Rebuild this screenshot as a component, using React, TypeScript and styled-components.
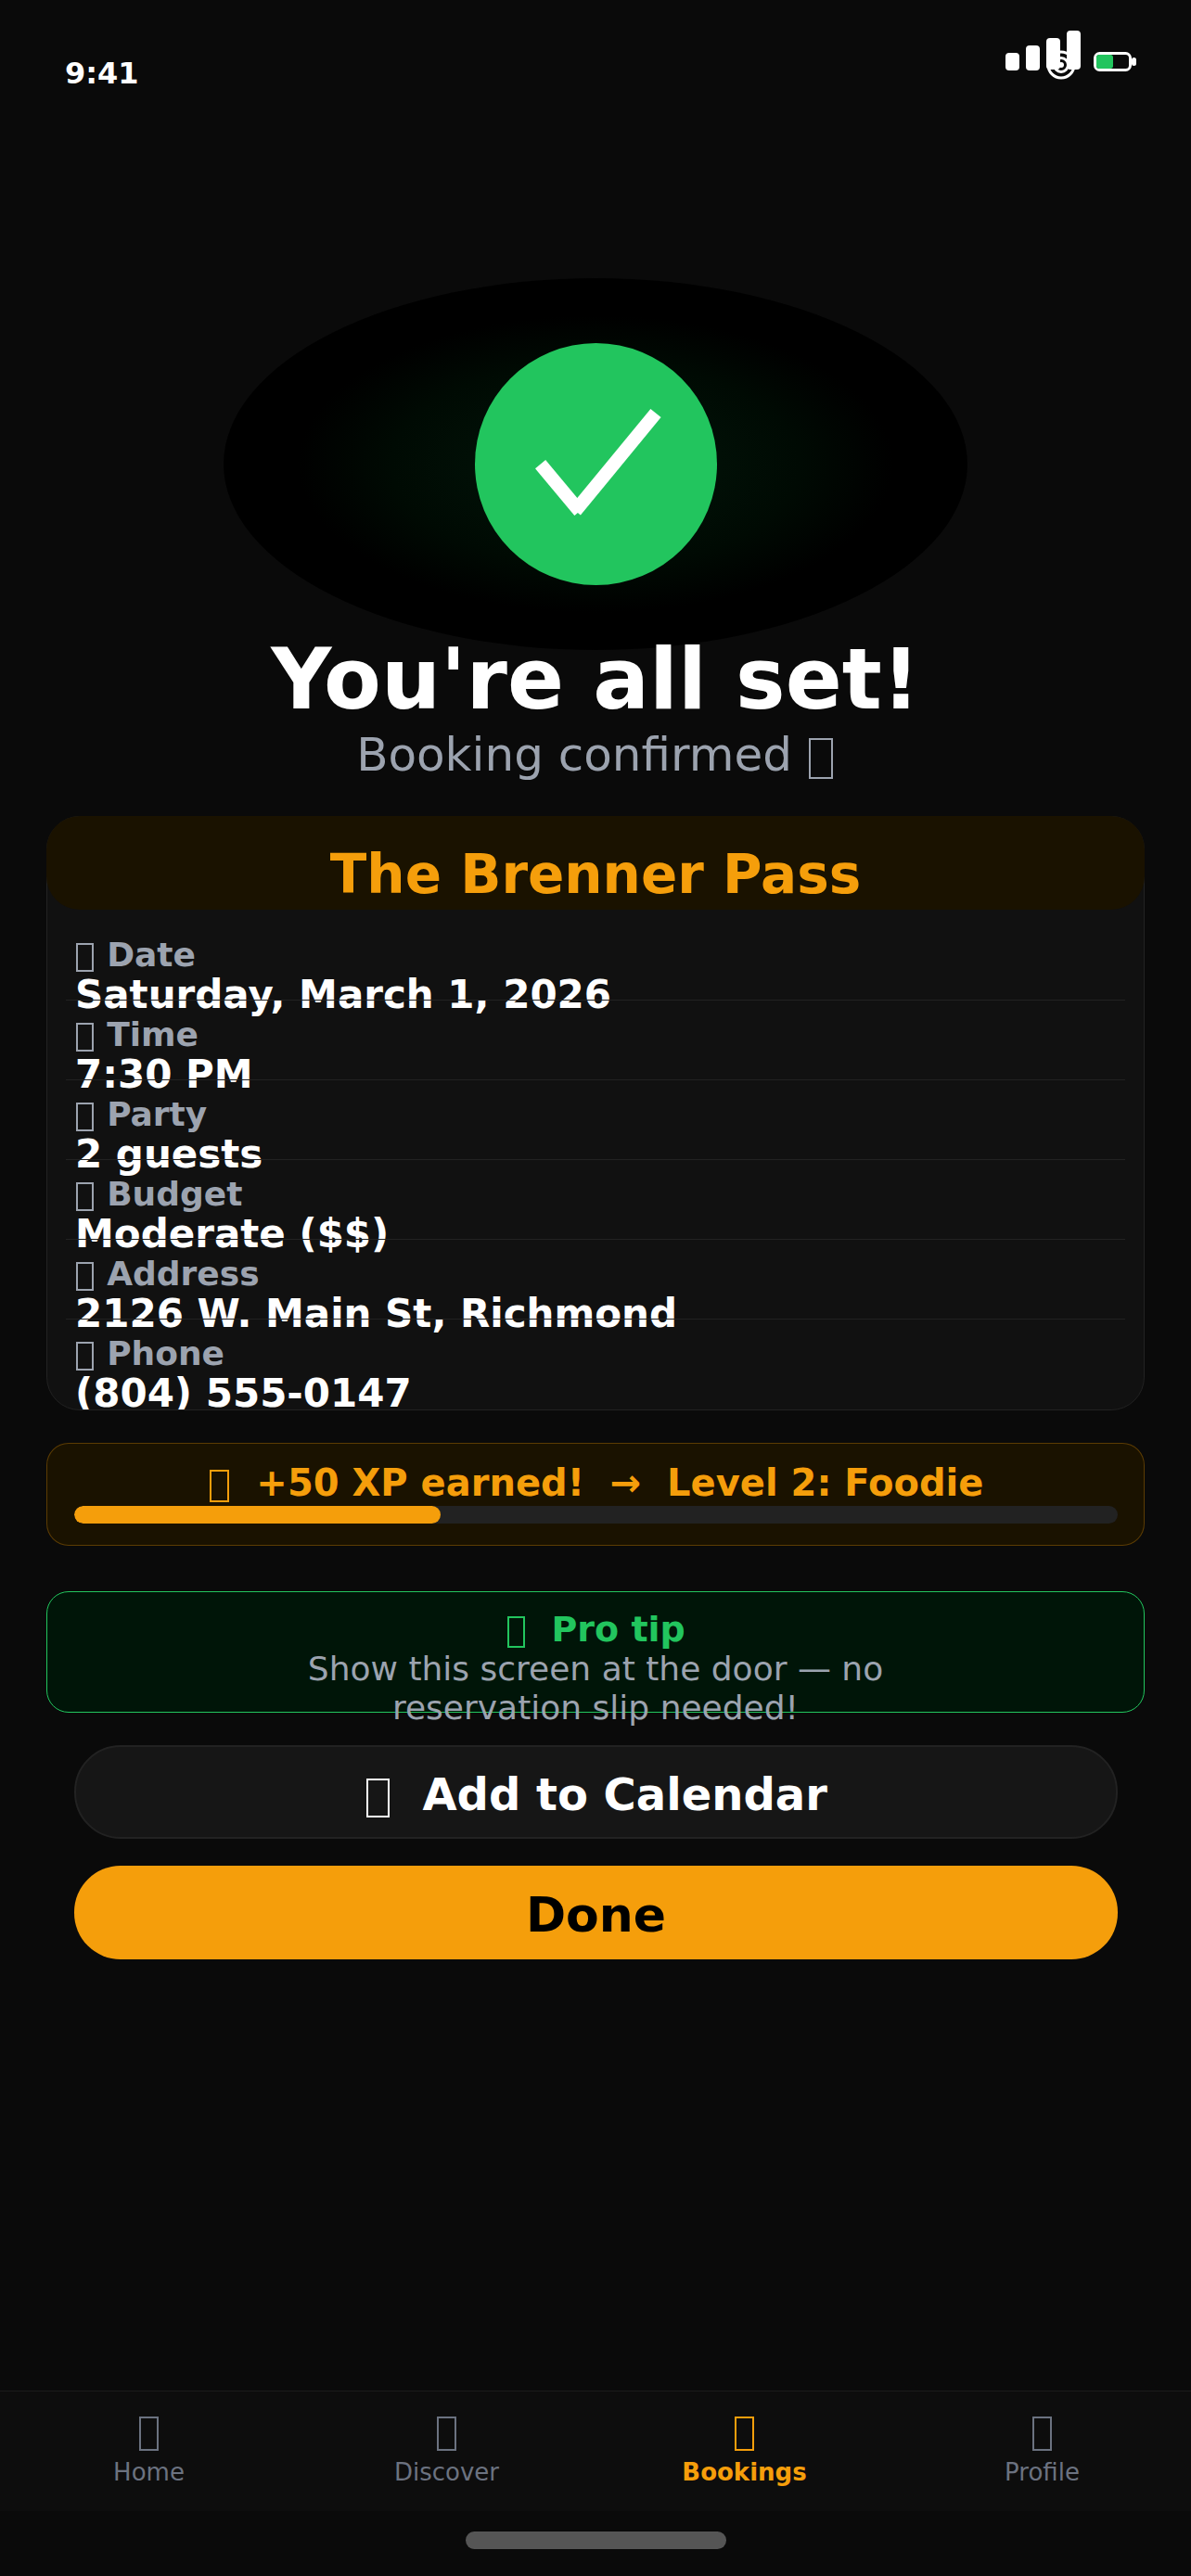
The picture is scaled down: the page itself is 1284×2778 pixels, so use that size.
import React, { FC } from 'react';
import styled, { createGlobalStyle } from 'styled-components';

const GlobalStyle = createGlobalStyle`
  html, body {
    margin: 0;
    padding: 0;
    background: #0a0a0a;
  }
  * {
    box-sizing: border-box;
  }
`;

const Page = styled.div`
  position: relative;
  display: flex;
  flex-direction: column;
  width: 1284px;
  height: 2778px;
  overflow: hidden;
  background: #0a0a0a;
  color: #fff;
  font-family: 'DejaVu Sans', sans-serif;
`;

const StatusBar = styled.div`
  display: flex;
  justify-content: space-between;
  align-items: flex-start;
  height: 370px;
  padding: 33px 59px 0 70px;
`;

const Time = styled.span`
  margin-top: 28px;
  font-size: 32px;
  font-weight: 700;
  line-height: 36px;
`;

const StatusIcons = styled.div`
  display: flex;
  align-items: flex-start;
  gap: 14px;
`;

// the missing-glyph box the reference shows in place of each emoji
const Tofu = styled.span`
  display: inline-block;
  width: 0.52em;
  height: 0.88em;
  margin: 0 0.04em;
  border: 2px solid currentColor;
  vertical-align: -0.18em;
`;

const Hero = styled.div`
  position: relative;
  display: flex;
  flex-direction: column;
  align-items: center;
`;

const Glow = styled.div`
  position: absolute;
  top: -70px;
  left: 241px;
  width: 802px;
  height: 401px;
  border-radius: 50%;
  background: radial-gradient(ellipse closest-side, #021a0b 0%, #010f06 34%, #000a03 55%, #000 80%);
`;

const CheckCircle = styled.div`
  position: relative;
  display: flex;
  align-items: center;
  justify-content: center;
  width: 261px;
  height: 261px;
  border-radius: 50%;
  background: #22c55e;
`;

const Title = styled.h1`
  position: relative;
  margin: 52px 0 0;
  font-size: 90px;
  font-weight: 700;
  line-height: 100px;
`;

const Subtitle = styled.p`
  margin: 0;
  font-size: 50px;
  line-height: 62px;
  color: #9ca3af;
`;

const Content = styled.div`
  display: flex;
  flex-direction: column;
  padding: 0 50px;
`;

const Card = styled.div`
  margin-top: 35px;
  height: 641px;
  display: flex;
  flex-direction: column;
  border: 1px solid #222;
  border-radius: 36px;
  background: #111;
`;

const CardHeader = styled.div`
  flex: none;
  height: 101px;
  margin: -1px -1px 0;
  border-radius: 36px;
  background: #1a1200;
  font-size: 58px;
  font-weight: 700;
  line-height: 126px;
  text-align: center;
  color: #f59e0b;
`;

const CardBody = styled.div`
  flex: 1;
  display: flex;
  flex-direction: column;
  min-height: 0;
  padding: 11px 20px;
  overflow: hidden;
  border-radius: 0 0 36px 36px;
`;

const Row = styled.div`
  flex: none;
  height: 86px;
  padding: 16px 10px 0;
  border-top: 1px solid transparent;

  & + & {
    border-top-color: #222;
  }
`;

const RowLabel = styled.div`
  font-size: 36px;
  font-weight: 700;
  line-height: 42px;
  color: #9ca3af;
`;

const RowValue = styled.div`
  font-size: 42px;
  font-weight: 700;
  line-height: 43px;
  white-space: nowrap;
`;

const XpBox = styled.div`
  height: 111px;
  margin-top: 35px;
  padding: 17px 28px 0 29px;
  border: 1px solid rgba(245, 158, 11, 0.3);
  border-radius: 24px;
  background: #1a1200;
`;

const XpText = styled.div`
  font-size: 40px;
  font-weight: 700;
  line-height: 50px;
  text-align: center;
  white-space: pre;
  color: #f59e0b;
`;

const XpTrack = styled.div`
  height: 19px;
  border-radius: 10px;
  background: #222;
  overflow: hidden;
`;

const XpFill = styled.div`
  height: 100%;
  border-radius: 10px;
  background: #f59e0b;
`;

const TipBox = styled.div`
  height: 131px;
  margin-top: 49px;
  padding: 19px 30px 0;
  border: 1px solid #22c55e;
  border-radius: 24px;
  background: #001508;
  text-align: center;
`;

const TipTitle = styled.div`
  font-size: 38px;
  font-weight: 700;
  line-height: 43px;
  white-space: pre;
  color: #22c55e;
`;

const TipText = styled.div`
  font-size: 36px;
  line-height: 42px;
  color: #9ca3af;
`;

const Actions = styled.div`
  display: flex;
  flex-direction: column;
  gap: 29px;
  margin-top: 35px;
  padding: 0 29px 0 30px;
`;

const ActionButton = styled.button<{ $primary?: boolean }>`
  height: 101px;
  padding: 4px 0 0;
  border: ${p => (p.$primary ? 'none' : '2px solid #222')};
  border-radius: 50px;
  background: ${p => (p.$primary ? '#f59e0b' : '#161616')};
  color: ${p => (p.$primary ? '#000' : '#fff')};
  font-family: inherit;
  font-size: ${p => (p.$primary ? '52px' : '48px')};
  font-weight: 700;
  white-space: pre;
`;

const BottomNav = styled.nav`
  display: grid;
  grid-template-columns: repeat(4, 1fr);
  height: 130px;
  margin-top: auto;
  padding-top: 17px;
  border-top: 1px solid #1c1c1c;
  background: #0d0d0d;
`;

const Tab = styled.div<{ $active?: boolean }>`
  display: flex;
  flex-direction: column;
  align-items: center;
  color: ${p => (p.$active ? '#f59e0b' : '#6b7280')};
  font-weight: ${p => (p.$active ? 700 : 400)};
`;

const TabIcon = styled.span`
  font-size: 42px;
  line-height: 50px;
`;

const TabLabel = styled.span`
  margin-top: 5px;
  font-size: 26px;
  line-height: 30px;
`;

const HomeBar = styled.div`
  display: flex;
  justify-content: center;
  height: 70px;
  padding-top: 22px;
`;

const HomeIndicator = styled.div`
  width: 281px;
  height: 19px;
  border-radius: 10px;
  background: #555;
`;

const rows = [
  { label: 'Date', value: 'Saturday, March 1, 2026' },
  { label: 'Time', value: '7:30 PM' },
  { label: 'Party', value: '2 guests' },
  { label: 'Budget', value: 'Moderate ($$)' },
  { label: 'Address', value: '2126 W. Main St, Richmond' },
  { label: 'Phone', value: '(804) 555-0147' },
];

const tabs = [
  { label: 'Home' },
  { label: 'Discover' },
  { label: 'Bookings', active: true },
  { label: 'Profile' },
];

const SignalIcon: FC = () => (
  <svg width="81" height="55" viewBox="0 0 81 55" fill="#fff">
    <rect x="0" y="24" width="15" height="19" rx="4" />
    <rect x="22" y="16" width="15" height="27" rx="4" />
    <rect x="44" y="8" width="15" height="34" rx="4" />
    <rect x="66" y="0" width="15" height="42" rx="4" />
    <circle cx="60" cy="37" r="14" fill="none" stroke="#fff" strokeWidth="3" />
    <circle cx="60" cy="37" r="7.5" fill="none" stroke="#fff" strokeWidth="3" />
    <circle cx="60" cy="37" r="3" />
  </svg>
);

const BatteryIcon: FC = () => (
  <svg width="46" height="21" viewBox="0 0 46 21" style={{ marginTop: 23 }}>
    <rect x="1.5" y="1.5" width="38" height="18" rx="5" fill="none" stroke="#fff" strokeWidth="3" />
    <rect x="3" y="3" width="18" height="15" rx="3" fill="#22c55e" />
    <rect x="41" y="6" width="5" height="9" rx="2.5" fill="#fff" />
  </svg>
);

const CheckMark: FC = () => (
  <svg width="261" height="261" viewBox="0 0 261 261" fill="none" stroke="#fff" strokeWidth="14.5">
    <line x1="70.6" y1="130.7" x2="112.9" y2="181.3" />
    <line x1="108.3" y1="180.9" x2="195" y2="75.5" />
  </svg>
);

const App: FC = () => {
  return (
    <Page>
      <GlobalStyle />
      <StatusBar>
        <Time>9:41</Time>
        <StatusIcons>
          <SignalIcon />
          <BatteryIcon />
        </StatusIcons>
      </StatusBar>
      <Hero>
        <Glow />
        <CheckCircle>
          <CheckMark />
        </CheckCircle>
        <Title>You're all set!</Title>
        <Subtitle>
          Booking confirmed <Tofu />
        </Subtitle>
      </Hero>
      <Content>
        <Card>
          <CardHeader>The Brenner Pass</CardHeader>
          <CardBody>
            {rows.map(row => (
              <Row key={row.label}>
                <RowLabel>
                  <Tofu /> {row.label}
                </RowLabel>
                <RowValue>{row.value}</RowValue>
              </Row>
            ))}
          </CardBody>
        </Card>
        <XpBox>
          <XpText>
            <Tofu />
            {'  +50 XP earned!  →  Level 2: Foodie'}
          </XpText>
          <XpTrack>
            <XpFill style={{ width: '35.1%' }} />
          </XpTrack>
        </XpBox>
        <TipBox>
          <TipTitle>
            <Tofu />
            {'  Pro tip'}
          </TipTitle>
          <TipText>
            Show this screen at the door — no
            <br />
            reservation slip needed!
          </TipText>
        </TipBox>
        <Actions>
          <ActionButton>
            <Tofu />
            {'  Add to Calendar'}
          </ActionButton>
          <ActionButton $primary>Done</ActionButton>
        </Actions>
      </Content>
      <BottomNav>
        {tabs.map(tab => (
          <Tab key={tab.label} $active={tab.active}>
            <TabIcon>
              <Tofu />
            </TabIcon>
            <TabLabel>{tab.label}</TabLabel>
          </Tab>
        ))}
      </BottomNav>
      <HomeBar>
        <HomeIndicator />
      </HomeBar>
    </Page>
  );
};

export default App;
